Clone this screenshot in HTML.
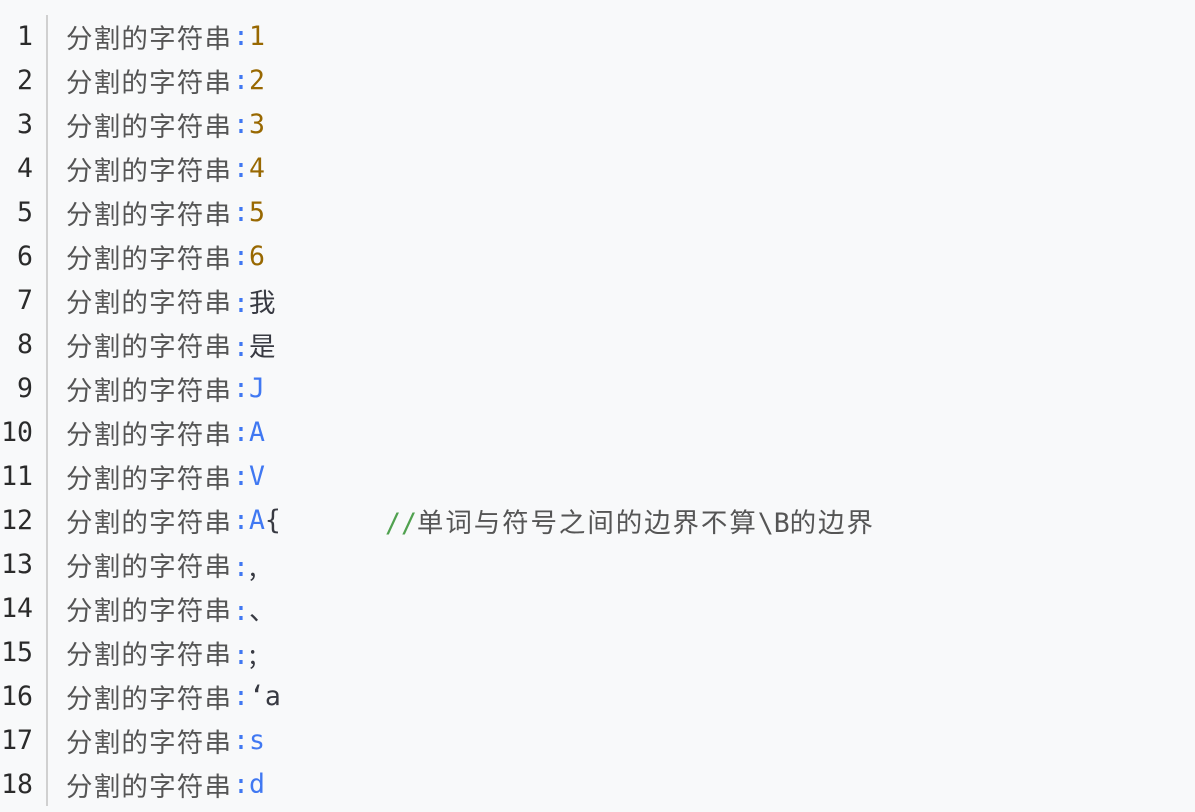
<!DOCTYPE html>
<html><head><meta charset="utf-8"><style>
body{margin:0;background:#f8f9fa;width:1195px;height:812px;overflow:hidden;position:relative}
.g{position:absolute;left:46px;top:15px;width:2px;height:791px;background:#d0d0d0}
.l{position:absolute;left:0;width:1195px;height:44px;line-height:44px;font-size:26.5px;font-family:"DejaVu Sans Mono","Noto Sans CJK SC",monospace;white-space:pre;color:#383a42}
.n{position:absolute;left:0;width:33px;text-align:right;color:#2b2b2b}
.c{position:absolute;left:66px;color:#555;letter-spacing:1.2px;font-family:"Noto Sans CJK SC",sans-serif}
.r{position:absolute;left:233px}
.b{color:#4078f2}.o{color:#986801}.t{color:#383a42}
.cm{position:absolute;left:385px;color:#555}
.gr{color:#50a14f}
.z{font-family:"Noto Sans CJK SC",sans-serif;letter-spacing:1.2px}
.cm .z{letter-spacing:1.9px}
</style></head><body>
<div class="g"></div>
<div class="l" style="top:15px"><span class="n">1</span><span class="c">分割的字符串</span><span class="r"><span class="b">:</span><span class="o">1</span></span></div>
<div class="l" style="top:59px"><span class="n">2</span><span class="c">分割的字符串</span><span class="r"><span class="b">:</span><span class="o">2</span></span></div>
<div class="l" style="top:103px"><span class="n">3</span><span class="c">分割的字符串</span><span class="r"><span class="b">:</span><span class="o">3</span></span></div>
<div class="l" style="top:147px"><span class="n">4</span><span class="c">分割的字符串</span><span class="r"><span class="b">:</span><span class="o">4</span></span></div>
<div class="l" style="top:191px"><span class="n">5</span><span class="c">分割的字符串</span><span class="r"><span class="b">:</span><span class="o">5</span></span></div>
<div class="l" style="top:235px"><span class="n">6</span><span class="c">分割的字符串</span><span class="r"><span class="b">:</span><span class="o">6</span></span></div>
<div class="l" style="top:279px"><span class="n">7</span><span class="c">分割的字符串</span><span class="r"><span class="b">:</span><span class="t z">我</span></span></div>
<div class="l" style="top:323px"><span class="n">8</span><span class="c">分割的字符串</span><span class="r"><span class="b">:</span><span class="t z">是</span></span></div>
<div class="l" style="top:367px"><span class="n">9</span><span class="c">分割的字符串</span><span class="r"><span class="b">:J</span></span></div>
<div class="l" style="top:411px"><span class="n">10</span><span class="c">分割的字符串</span><span class="r"><span class="b">:A</span></span></div>
<div class="l" style="top:455px"><span class="n">11</span><span class="c">分割的字符串</span><span class="r"><span class="b">:V</span></span></div>
<div class="l" style="top:499px"><span class="n">12</span><span class="c">分割的字符串</span><span class="r"><span class="b">:A</span><span class="t">{</span></span><span class="cm"><span class="gr">//</span><span class="z">单词与符号之间的边界不算</span>\B<span class="z">的边界</span></span></div>
<div class="l" style="top:543px"><span class="n">13</span><span class="c">分割的字符串</span><span class="r"><span class="b">:</span><span class="t z">,</span></span></div>
<div class="l" style="top:587px"><span class="n">14</span><span class="c">分割的字符串</span><span class="r"><span class="b">:</span><span class="t z">、</span></span></div>
<div class="l" style="top:631px"><span class="n">15</span><span class="c">分割的字符串</span><span class="r"><span class="b">:</span><span class="t z">;</span></span></div>
<div class="l" style="top:675px"><span class="n">16</span><span class="c">分割的字符串</span><span class="r"><span class="b">:</span><span class="t">‘a</span></span></div>
<div class="l" style="top:719px"><span class="n">17</span><span class="c">分割的字符串</span><span class="r"><span class="b">:s</span></span></div>
<div class="l" style="top:763px"><span class="n">18</span><span class="c">分割的字符串</span><span class="r"><span class="b">:d</span></span></div>
</body></html>
